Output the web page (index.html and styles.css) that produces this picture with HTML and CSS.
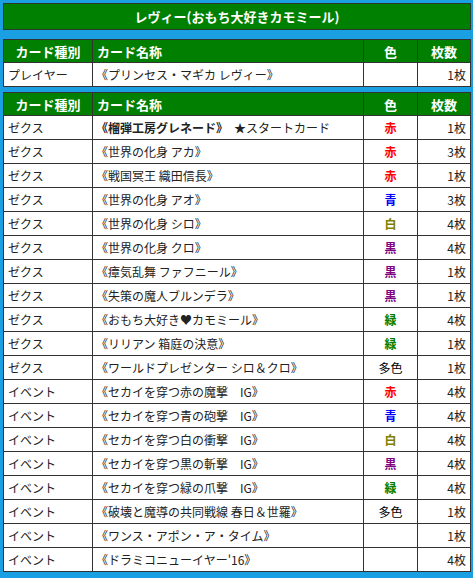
FILE: index.html
```html
<!DOCTYPE html>
<html lang="ja">
<head>
  <meta charset="UTF-8" />
  <title>レヴィー デッキ</title>
  <link rel="stylesheet" href="styles.css">
</head>
<body>
  <div class="title">レヴィー(おもち大好きカモミール)</div>

  <table class="deck first">
    <colgroup><col class="c-kind"><col class="c-name"><col class="c-color"><col class="c-num"></colgroup>
    <tr><th>カード種別</th><th class="name">カード名称</th><th>色</th><th>枚数</th></tr>
    <tr><td>プレイヤー</td><td class="name">《プリンセス・マギカ レヴィー》</td><td class="color"></td><td class="num">1枚</td></tr>
  </table>

  <table class="deck">
    <colgroup><col class="c-kind"><col class="c-name"><col class="c-color"><col class="c-num"></colgroup>
    <tr><th>カード種別</th><th class="name">カード名称</th><th>色</th><th>枚数</th></tr>
    <tr><td>ゼクス</td><td class="name"><b>《榴弾工房グレネード》</b>　★スタートカード</td><td class="color red">赤</td><td class="num">1枚</td></tr>
    <tr><td>ゼクス</td><td class="name">《世界の化身 アカ》</td><td class="color red">赤</td><td class="num">3枚</td></tr>
    <tr><td>ゼクス</td><td class="name">《戦国冥王 織田信長》</td><td class="color red">赤</td><td class="num">1枚</td></tr>
    <tr><td>ゼクス</td><td class="name">《世界の化身 アオ》</td><td class="color blue">青</td><td class="num">3枚</td></tr>
    <tr><td>ゼクス</td><td class="name">《世界の化身 シロ》</td><td class="color white">白</td><td class="num">4枚</td></tr>
    <tr><td>ゼクス</td><td class="name">《世界の化身 クロ》</td><td class="color black">黒</td><td class="num">4枚</td></tr>
    <tr><td>ゼクス</td><td class="name">《瘴気乱舞 ファフニール》</td><td class="color black">黒</td><td class="num">1枚</td></tr>
    <tr><td>ゼクス</td><td class="name">《失策の魔人ブルンデラ》</td><td class="color black">黒</td><td class="num">1枚</td></tr>
    <tr><td>ゼクス</td><td class="name">《おもち大好き♥カモミール》</td><td class="color green">緑</td><td class="num">4枚</td></tr>
    <tr><td>ゼクス</td><td class="name">《リリアン 箱庭の決意》</td><td class="color green">緑</td><td class="num">1枚</td></tr>
    <tr><td>ゼクス</td><td class="name">《ワールドプレゼンター シロ＆クロ》</td><td class="color multi">多色</td><td class="num">1枚</td></tr>
    <tr><td>イベント</td><td class="name">《セカイを穿つ赤の魔撃　IG》</td><td class="color red">赤</td><td class="num">4枚</td></tr>
    <tr><td>イベント</td><td class="name">《セカイを穿つ青の砲撃　IG》</td><td class="color blue">青</td><td class="num">4枚</td></tr>
    <tr><td>イベント</td><td class="name">《セカイを穿つ白の衝撃　IG》</td><td class="color white">白</td><td class="num">4枚</td></tr>
    <tr><td>イベント</td><td class="name">《セカイを穿つ黒の斬撃　IG》</td><td class="color black">黒</td><td class="num">4枚</td></tr>
    <tr><td>イベント</td><td class="name">《セカイを穿つ緑の爪撃　IG》</td><td class="color green">緑</td><td class="num">4枚</td></tr>
    <tr><td>イベント</td><td class="name">《破壊と魔導の共同戦線 春日＆世羅》</td><td class="color multi">多色</td><td class="num">1枚</td></tr>
    <tr><td>イベント</td><td class="name">《ワンス・アポン・ア・タイム》</td><td class="color"></td><td class="num">1枚</td></tr>
    <tr><td>イベント</td><td class="name">《ドラミコニューイヤー'16》</td><td class="color"></td><td class="num">4枚</td></tr>
  </table>
</body>
</html>
```

FILE: styles.css
```css
* { box-sizing: border-box; }
body {
  margin: 0;
  padding: 3px 2px 3px 3px;
  background: #1a9fe2;
  font-family: "Noto Sans CJK JP", "Noto Sans", sans-serif;
  font-size: 12px;
  color: #222;
}

.title {
  height: 27px;
  line-height: 25px;
  background: #008000;
  border: 1px solid #2a3a2a;
  color: #fff;
  font-weight: bold;
  font-size: 13px;
  text-align: center;
  margin-bottom: 9px;
}

.deck {
  width: 100%;
  border-collapse: collapse;
  table-layout: fixed;
  background: #fff;
  border: 1px solid #333;
}
.deck.first { margin-bottom: 5px; }

.c-kind { width: 89px; }
.c-color { width: 54px; }
.c-num { width: 53px; }

.deck th {
  height: 23px;
  padding: 0 4px;
  background: #007f00;
  color: #fff;
  font-size: 13px;
  font-weight: bold;
  text-align: center;
  border: 1px solid #333;
}
.deck th.name { text-align: left; }

.deck td {
  height: 24px;
  padding: 0 4px;
  border: 1px solid #333;
  white-space: nowrap;
}
.deck td.name { padding-left: 3px; }
.deck td.color { text-align: center; font-weight: bold; }
.deck td.num { text-align: right; }

.red { color: #f00; }
.blue { color: #00f; }
.white { color: #808000; }
.black { color: #800080; }
.green { color: #008000; }
.deck td.multi { color: #000; font-weight: normal; }
```
